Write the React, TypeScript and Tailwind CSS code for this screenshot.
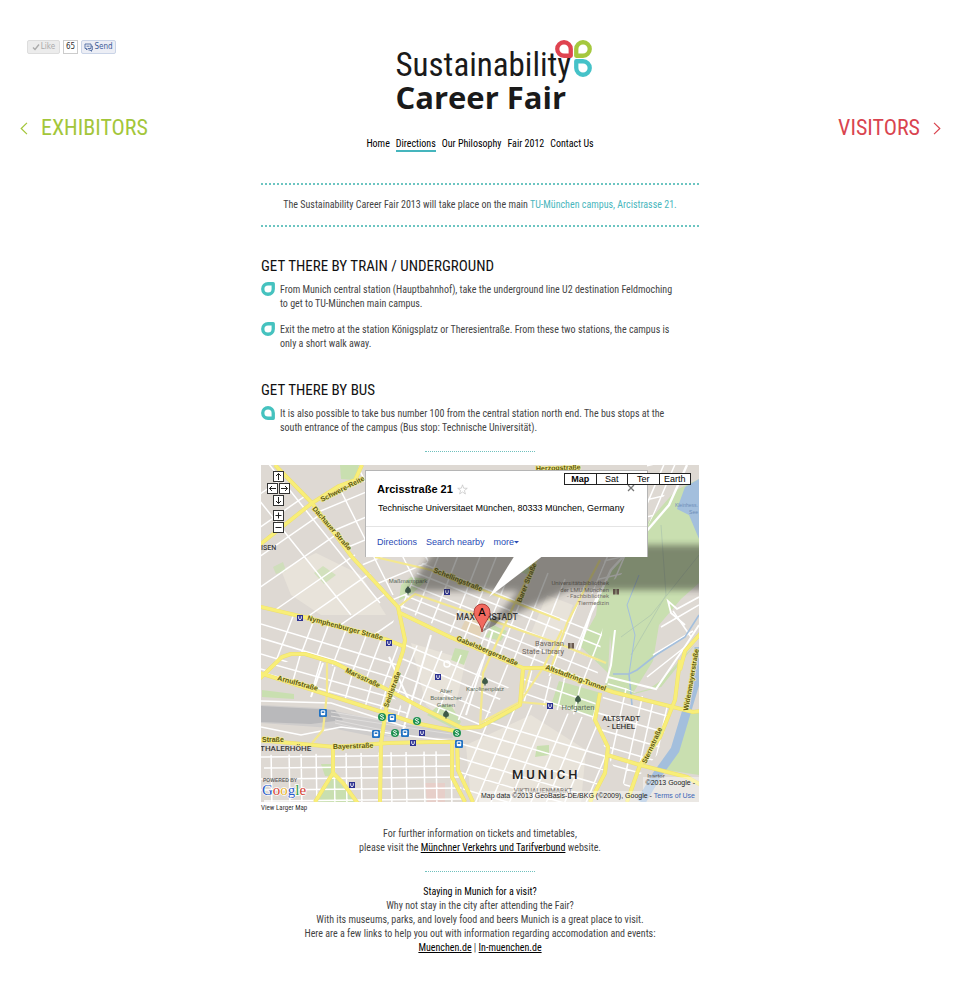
import type { ReactNode } from "react";

const BODY = "font-['Roboto_Condensed','Liberation_Sans',sans-serif]";
const ARIAL = "font-['Liberation_Sans',sans-serif]";

type Corner = "tl" | "tr" | "bl" | "br";
const cornerTurn: Record<Corner, number> = { tr: 0, br: 90, bl: 180, tl: 270 };

/* A ring whose square corner points to the given side. */
function Petal({ corner, className }: { corner: Corner; className: string }) {
  return (
    <svg viewBox="0 0 16 16" className={className} aria-hidden="true">
      <path
        transform={`rotate(${cornerTurn[corner]} 8 8)`}
        d="M8 2H14V8A6 6 0 1 1 8 2Z"
        fill="white"
        stroke="currentColor"
        strokeWidth="3.8"
        strokeLinejoin="round"
      />
    </svg>
  );
}

function Divider() {
  return <hr className="mx-auto w-[110px] border-t border-dotted border-[#6fc0bd]" />;
}

/* ---------- map ---------- */

function hatch(x: number, y: number, dx: number, dy: number, sx: number, sy: number, n: number) {
  let d = "";
  for (let i = 0; i < n; i++) {
    const skew = i % 3 === 1 ? 3 : 0;
    d += `M${x + sx * i + skew} ${y + sy * i}l${dx} ${dy}`;
  }
  return d;
}

const districts = [
  { id: "a", area: "0,0 14,0 51,38 137,142 127,174 0,142", roads: hatch(-60, 70, 130, -90, 16, 20, 10) + hatch(-30, 0, 120, 150, 26, -12, 5) },
  { id: "b", area: "0,142 127,174 142,185 127,225 44,189 0,208", roads: hatch(-10, 156, 160, 48, 0, 15, 5) + hatch(6, 220, 34, -90, 19, 1, 8) },
  { id: "c", area: "51,38 94,15 104,0 104,92 170,92 137,142", roads: hatch(50, 50, 120, -50, 9, 20, 6) + hatch(72, 10, 60, 120, 24, -4, 5) },
  { id: "d", area: "137,142 165,92 400,60 345,130 335,225 262,203", roads: hatch(120, 82, 260, 104, 0, 13, 7) + hatch(96, 200, 55, -140, 17, 6, 14) },
  { id: "e", area: "144,178 262,203 219,262 161,243 127,225", roads: hatch(120, 170, 140, 58, 2, 17, 5) + hatch(132, 240, 34, -84, 21, 7, 7) },
  { id: "f", area: "44,189 127,225 154,258 61,228 1,208 21,192", roads: hatch(0, 196, 150, 42, 0, 12, 4) + hatch(28, 230, 14, -50, 18, 4, 7) },
  { id: "g", area: "0,290 191,286 204,337 0,337", roads: hatch(0, 292, 204, -2, 0, 11, 5) + hatch(10, 284, 1, 60, 15, 0, 13) },
  { id: "h", area: "194,268 262,238 334,255 346,290 335,337 204,337", roads: hatch(190, 246, 170, 50, -3, 14, 8) + hatch(190, 345, 46, -110, 18, 1, 11) },
  { id: "i", area: "348,215 404,242 412,240 396,290 366,325 346,290 334,255", roads: hatch(330, 214, 90, 26, 0, 16, 7) + hatch(342, 330, 26, -120, 15, 0, 6) },
  { id: "j", area: "386,0 420,0 360,110 330,130 345,92 386,92", roads: hatch(330, 14, 110, -26, 0, 17, 8) + hatch(330, 130, 60, -140, 14, 0, 6) },
  { id: "k", area: "262,203 335,225 334,255 262,236", roads: hatch(250, 210, 100, 34, 0, 15, 3) + hatch(260, 250, 12, -50, 17, 2, 5) },
];

const sideStreets = [
  "114 92L170 105L222 125L299 155",
  "137 142L154 129L206 147L296 178L345 198",
  "277 92L252 142L222 208L219 262",
  "339 95L306 158L291 200",
  "66 198L66 228L62 265L51 278",
  "269 205L259 237L219 258",
  "301 165L282 203L259 237L292 240",
];

const mainRoads = [
  "14 0L51 38L91 92L137 142L144 175L142 186L127 232L120 278L119 337",
  "-4 82L51 38L78 21L94 15L101 0",
  "-4 141L47 153L127 175L144 182",
  "137 147L189 172L262 203L282 203L352 227L432 247L440 246",
  "-4 216L21 192L30 189L44 189L74 198L127 225L161 243L201 263L219 262L259 240L262 203",
  "-4 207L61 228L121 247L154 258L194 266",
  "-4 275L74 282L127 278L170 277L200 277",
  "191 277L191 312L204 337",
  "196 277L197 305L212 337",
  "72 282L72 308L54 337",
  "72 308L82 318L98 340",
  "339 228L334 255L347 282L344 308L329 337",
  "346 290L379 300L426 312L440 320",
  "419 195L414 235L399 272L379 300L366 337",
  "440 168L424 186L419 205",
];

type Label = [text: string, x: number, y: number, turn: number];
const streetLabels: Label[] = [
  ["Schwere-Reite", 61, 37, -27],
  ["Dachauer Straße", 51, 44, 49],
  ["Nymphenburger Straße", 46, 155, 15],
  ["Marsstraße", 84, 207, 25],
  ["Arnulfstraße", 16, 215, 15],
  ["Seidlstraße", 127, 243, -70],
  ["Bayerstraße", 72, 284, -2],
  ["Straße", 1, 277, 0],
  ["Schellingstraße", 172, 107, 22],
  ["Gabelsbergerstraße", 195, 175, 23],
  ["Barer Straße", 260, 138, -68],
  ["Altstadtring-Tunnel", 284, 204, 20],
  ["Sternstraße", 385, 299, -65],
  ["Widenmayerstraße", 427, 246, -80],
  ["Herzogstraße", 275, 6, -2],
];

const stations: [number, number][] = [[39, 153], [186, 127], [128, 178], [177, 212], [289, 241], [161, 268], [152, 278], [91, 320]];
const trains: [number, number][] = [[62, 248], [131, 253], [115, 269], [144, 268], [198, 279]];
const suburban: [number, number][] = [[121, 252], [156, 256], [134, 268], [196, 268]];
const trees: [number, number][] = [[147, 125], [224, 216], [317, 234], [185, 249]];

function MapDrawing() {
  return (
    <svg
      viewBox="0 0 438 337"
      preserveAspectRatio="xMidYMid slice"
      className={`absolute inset-0 size-full ${ARIAL}`}
      role="img"
      aria-label="Map of central Munich"
    >
      <defs>
        {districts.map((d) => (
          <clipPath key={d.id} id={`district-${d.id}`}>
            <polygon points={d.area} />
          </clipPath>
        ))}
        <filter id="soft" x="-10%" y="-20%" width="120%" height="140%">
          <feGaussianBlur stdDeviation="3" />
        </filter>
      </defs>
      <rect width="438" height="337" fill="#ded9d3" />
      <g fill="#e8e3da">
        <path d="M20 105L55 88L100 110L125 150L60 150L30 130Z" />
        <path d="M150 178L205 195L190 260L165 240Z" />
        <path d="M205 280L270 250L325 285L320 337H210Z" />
        <path d="M286 130L312 140L298 178L270 168Z" />
      </g>
      <path d="M209 145L226 152L218 174L200 164Z" fill="#e3d3b8" />
      <path d="M164 318h20v19h-18Z" fill="#e7cfc9" />
      <g fill="#c9dfb0">
        <path d="M438 14L415 25L380 65L350 105L338 126L335 150L318 180L347 208L349 170L354 219L400 222L438 175Z" />
        <path d="M362 165L438 120V172L400 222L362 232L344 222L350 195Z" />
        <path d="M425 247H438V310L405 305L418 285Z" />
        <path d="M79 0H98L94 15L80 14Z" />
        <path d="M140 120L150 112L167 114L152 128L138 136Z" />
        <path d="M298 216L340 228L332 252L290 240Z" />
        <path d="M178 240L190 240L200 257L194 264L166 250Z" />
        <path d="M1 225L33 229V234L1 232Z" />
        <path d="M72 309L94 337H56Z" />
        <path d="M60 299h14v12h-10Z" />
        <path d="M194 183L208 186L203 200L190 195Z" />
        <path d="M276 281L288 280V290L274 292Z" />
        <path d="M250 96L262 92L274 100L268 110L250 104Z" />
        <path d="M232 160L246 166L240 176L224 172Z" />
        <path d="M53 108L62 101L75 110L63 119Z" opacity=".7" />
        <path d="M12 102L22 97L25 106L15 109Z" opacity=".7" />
        <path d="M236 248L258 238L254 246L224 262Z" />
      </g>
      <path d="M398 160L420 134L438 118V176L424 190L402 214L388 224L372 228L392 196Z" fill="#ded9d3" />
      <path d="M400 162L438 140M392 190L432 166M386 212L424 182M412 146L430 172" stroke="white" strokeWidth="1.5" fill="none" />
      <g fill="none" stroke="#b5cdae" strokeWidth="1">
        <path d="M438 90L390 150L360 172" />
        <path d="M400 60L405 130L370 190" />
      </g>
      <path d="M0 240L60 243L130 258L190 262L192 273L110 271L70 263L0 258Z" fill="#cfcdcc" />
      <path d="M0 241L74 245L82 255L50 259L0 257Z" fill="#b9b9bb" />
      <path d="M70 247L190 266M70 251L190 269M74 255L150 271M74 258L130 271" stroke="#e0dedd" strokeWidth="1" fill="none" />
      <g fill="none" stroke="#a3bfdd">
        <path d="M438 182V205L426 245L414 285L396 310L380 337" strokeWidth="9" />
        <path d="M438 150L424 172L395 190L376 205L368 209L352 209M368 209L371 240" strokeWidth="1.6" />
        <path d="M368 209L374 170L366 140L378 110" strokeWidth="1" />
      </g>
      <path d="M424 22L438 14V74L428 50L416 44Z" fill="#a3bfdd" />
      <g fill="none" stroke="white" strokeWidth="1.5">
        {districts.map((d) => (
          <path key={d.id} d={d.roads} clipPath={`url(#district-${d.id})`} />
        ))}
        <path d="M426 0L408 40L384 68L350 105L330 148L318 185" strokeWidth="2.4" />
        <path d="M354 165L350 200L345 218M347 212L395 224L425 180L438 160" strokeWidth="2" />
        <path d="M438 132L416 144L407 136L410 148L424 160" strokeWidth="1.8" />
        <path d="M0 262L40 270L80 262L190 276M0 236L70 238L145 262" />
        <path d="M128 192L150 240M170 170L142 265M62 198L50 232M232 165L205 250" strokeWidth="2" />
        <circle cx="186" cy="199" r="3" />
      </g>
      <g fill="none" strokeLinejoin="round">
        <g stroke="#f4e88e" strokeWidth="2.2">
          {sideStreets.map((d) => <path key={d} d={`M${d}`} />)}
        </g>
        <g stroke="#eedf6c" strokeWidth="4">
          {mainRoads.map((d) => <path key={d} d={`M${d}`} />)}
        </g>
        <g stroke="#f8ee78" strokeWidth="3.2">
          {mainRoads.map((d) => <path key={d} d={`M${d}`} />)}
        </g>
      </g>

      <g fontSize="7" fontWeight="bold" fill="#5c570e" stroke="#f3eb8c" strokeWidth="1.4" paintOrder="stroke" strokeLinejoin="round">
        {streetLabels.map(([t, x, y, turn]) => (
          <text key={t} x={x} y={y} transform={`rotate(${turn} ${x} ${y})`}>{t}</text>
        ))}
      </g>
      <g fontSize="6" fill="#5c6b5c" textAnchor="middle">
        <text x="147" y="118">Maßmannpark</text>
        <text x="224" y="226">Karolinenplatz</text>
        <text x="185" y="228">Alter</text>
        <text x="185" y="235">Botanischer</text>
        <text x="185" y="242">Garten</text>
        <text x="317" y="245" fontSize="7.5">Hofgarten</text>
        <text x="437" y="42" textAnchor="end" fill="#6d8db8" fontSize="5">Kleinhess.</text>
        <text x="437" y="49" textAnchor="end" fill="#6d8db8" fontSize="5">See</text>
      </g>
      <g fontSize="7.5" fill="#6e665f" textAnchor="end" className="font-['Roboto',sans-serif]">
        <text x="303" y="181">Bavarian</text>
        <text x="303" y="189">State Library</text>
      </g>
      <g fontSize="6" fill="#77716b" textAnchor="end" className="font-['Roboto',sans-serif]">
        <text x="348" y="120">Universitätsbibliothek</text>
        <text x="348" y="127">der LMU München</text>
        <text x="348" y="133">- Fachbibliothek</text>
        <text x="348" y="140">Tiermedizin</text>
      </g>
      {[[310, 181], [355, 127]].map(([x, y]) => (
        <g key={x}>
          <path d={`M${x - 3} ${y - 3}h2.6v5.4h-2.6zM${x + 0.4} ${y - 3}h2.6v5.4h-2.6z`} fill="#6b5b50" />
        </g>
      ))}
      <g fill="#3e5a48">
        {trees.map(([x, y]) => (
          <path key={x} d={`M${x} ${y - 4}q3 3 3 5q0 2 -2.4 2v1.4h-1.2v-1.4q-2.4 0 -2.4 -2q0 -2 3 -5Z`} />
        ))}
      </g>
      <g fontSize="8" fontWeight="500" fill="#3a3a3a" className="font-['Roboto',sans-serif]">
        <text x="0" y="85" fontSize="7">ISEN</text>
        <text x="-1" y="286">THALERHÖHE</text>
        <text x="226" y="155" textAnchor="middle" fontSize="8.5">MAXVORSTADT</text>
        <text x="360" y="256" textAnchor="middle">ALTSTADT</text>
        <text x="360" y="264" textAnchor="middle">- LEHEL</text>
        <text x="251" y="314" fontSize="13" letterSpacing="3" fill="#222">MUNICH</text>
        <text x="282" y="328" fontSize="6.5" textAnchor="middle" fill="#8b8681">VIKTUALIENMARKT</text>
        <text x="395" y="313" fontSize="6" textAnchor="middle" fill="#6e665f">Isartor</text>
      </g>

      {stations.map(([x, y]) => (
        <g key={`${x}-${y}`}>
          <rect x={x - 3} y={y - 3} width="6" height="6" fill="#2c3191" />
          <path d={`M${x - 1.3} ${y - 1.8}v2q0 1.4 1.3 1.4t1.3 -1.4v-2`} fill="none" stroke="white" strokeWidth=".9" />
        </g>
      ))}
      {trains.map(([x, y]) => (
        <g key={`${x}-${y}`}>
          <rect x={x - 4} y={y - 4} width="8" height="8" rx="1.2" fill="#2273c3" />
          <rect x={x - 2.2} y={y - 2.8} width="4.4" height="5" rx="1" fill="white" />
          <rect x={x - 1.3} y={y - 1.6} width="2.6" height="1.6" fill="#2273c3" />
        </g>
      ))}
      {suburban.map(([x, y]) => (
        <g key={`${x}-${y}`}>
          <circle cx={x} cy={y} r="4" fill="#1d9150" />
          <path d={`M${x + 1.7} ${y - 1.6}q-3 -1.6 -3.4 0q0 1 1.7 1.4q1.9 .5 1.7 1.6q-.5 1.6 -3.5 .2`} fill="none" stroke="white" strokeWidth="1" />
        </g>
      ))}

      {/* balloon shadow */}
      <g fill="#2c2a26" opacity=".48" filter="url(#soft)">
        <path d="M184 80H446V125H308L228 160L258 126H146L168 92Z" />
      </g>
      {/* marker */}
      <path d="M221 167L232 151L240 153L234 160Z" fill="black" opacity=".35" />
      <path d="M221 167C220 158 213 154 213 147A8 8 0 0 1 229 147C229 154 222 158 221 167Z" fill="#f2695f" stroke="#9c2c26" strokeWidth=".8" />
      <text x="221" y="151" fontSize="11" textAnchor="middle" fill="black">A</text>
      {/* balloon tail */}
      <path d="M254 90L228 132L283 90Z" fill="white" />

      <path d="M218 326H438V337H218Z M382 312H438V326H382Z" fill="white" opacity=".4" />
      <text x="2" y="317" fontSize="5" fontWeight="bold" fill="#666">POWERED BY</text>
      <text x="1" y="330" fontSize="15" className="font-['Liberation_Serif',serif]" stroke="white" strokeWidth="1.4" paintOrder="stroke">
        <tspan fill="#2a5ac8">G</tspan>
        <tspan fill="#d43a2f">o</tspan>
        <tspan fill="#e8b324">o</tspan>
        <tspan fill="#2a5ac8">g</tspan>
        <tspan fill="#2e9c46">l</tspan>
        <tspan fill="#d43a2f">e</tspan>
      </text>
    </svg>
  );
}

function PanButton({ label, d, className }: { label: string; d: string; className: string }) {
  return (
    <button type="button" aria-label={label} className={`flex size-[11px] items-center justify-center border border-[#333] bg-white ${className}`}>
      <svg viewBox="0 0 9 9" className="size-[9px]" fill="none" stroke="#222" strokeWidth="1" aria-hidden="true">
        <path d={d} />
      </svg>
    </button>
  );
}

function MapView() {
  const views = ["Map", "Sat", "Ter", "Earth"];
  return (
    <div className="relative h-[337px] overflow-hidden">
      <MapDrawing />

      <div className={`absolute left-[104px] top-[5px] h-[87px] w-[283px] border border-b-0 border-[#b5b5b5] bg-white ${ARIAL}`}>
        <div className="h-[56px] border-b border-[#e4e4e4] px-[11px] pt-[11px]">
          <div className="flex items-center gap-1">
            <h3 className="text-[11px] font-bold leading-[14px] text-black">Arcisstraße 21</h3>
            <svg viewBox="0 0 12 12" className="size-[11px]" fill="none" stroke="#c4c4c4" strokeWidth=".8" aria-label="Save place" role="img">
              <path d="M6 .9L7.3 4.6L11.2 4.7L8.1 7.1L9.2 10.9L6 8.7L2.8 10.9L3.9 7.1L.8 4.7L4.7 4.6Z" />
            </svg>
          </div>
          <p className="mt-[6px] whitespace-nowrap px-px text-[9px] leading-[12px] text-black">
            Technische Universitaet München, 80333 München, Germany
          </p>
        </div>
        <div className="flex gap-[9px] px-[11px] pt-2 text-[9px] leading-[14px] text-[#2a4bb5]">
          <a href="#directions">Directions</a>
          <a href="#nearby">Search nearby</a>
          <a href="#more" className="flex items-center">
            more
            <svg viewBox="0 0 5 4" className="h-1 w-[5px]" fill="currentColor" aria-hidden="true"><path d="M0 1H5L2.5 3.4Z" /></svg>
          </a>
        </div>
        <button type="button" aria-label="Close" className="absolute right-3 top-[13px] size-[8px] text-[#777]">
          <svg viewBox="0 0 8 8" fill="none" stroke="currentColor" strokeWidth="1.3"><path d="M1 1L7 7M7 1L1 7" /></svg>
        </button>
      </div>

      <div className={`absolute right-2 top-2 flex w-[127px] border border-[#222] bg-white text-[9px] leading-[10px] text-black ${ARIAL}`}>
        {views.map((v, i) => (
          <button key={v} type="button" className={`flex-1 basis-0 ${i > 0 ? "border-l border-[#222]" : "font-bold"}`}>{v}</button>
        ))}
      </div>

      <div className="absolute left-[6px] top-[6px] grid grid-cols-4 gap-px">
        <PanButton label="Pan up" d="M4.5 8V1.5M2 4L4.5 1.5L7 4" className="col-span-4 mx-auto" />
        <div className="col-span-4 flex gap-px">
          <PanButton label="Pan left" d="M8 4.5H1.5M4 2L1.5 4.5L4 7" className="" />
          <PanButton label="Pan right" d="M1 4.5H7.5M5 2L7.5 4.5L5 7" className="" />
        </div>
        <PanButton label="Pan down" d="M4.5 1V7.5M2 5L4.5 7.5L7 5" className="col-span-4 mx-auto" />
        <PanButton label="Zoom in" d="M4.5 1.5V7.5M1.5 4.5H7.5" className="col-span-4 mx-auto mt-[3px]" />
        <PanButton label="Zoom out" d="M1.5 4.5H7.5" className="col-span-4 mx-auto" />
      </div>

      <p className={`absolute bottom-0 right-1 whitespace-nowrap text-right text-[7px] leading-[13px] text-[#222] ${ARIAL}`}>
        ©2013 Google -
        <br />
        Map data ©2013 GeoBasis-DE/BKG (©2009), Google - <a href="#terms" className="text-[#3d67b8]">Terms of Use</a>
      </p>
    </div>
  );
}

/* ---------- page ---------- */

const nav = ["Home", "Directions", "Our Philosophy", "Fair 2012", "Contact Us"];

function Bullet({ corner, children }: { corner: Corner; children: ReactNode }) {
  return (
    <li className="flex gap-[5px]">
      <Petal corner={corner} className="-mt-px size-[14px] shrink-0 text-[#45c2bf]" />
      <span>{children}</span>
    </li>
  );
}

export default function App() {
  return (
    <div className={`grid min-h-screen grid-cols-[1fr_minmax(0,438px)_1fr] bg-white pb-10 text-[10px] leading-[14px] text-[#444] ${BODY}`}>
      <aside className="flex flex-col gap-[61px] pl-5 pt-10">
        <div className="ml-[7px] flex gap-[3px] font-['DejaVu_Sans_Condensed','DejaVu_Sans',sans-serif] text-[8px] leading-[12px]">
          <button type="button" className="flex w-[33px] items-center justify-center gap-px rounded-xs border border-[#ddd] bg-[#ececec] text-[#aaa]">
            <svg viewBox="0 0 8 8" className="size-[8px]" fill="none" stroke="currentColor" strokeWidth="1.4" aria-hidden="true"><path d="M1 4.5L3 6.5L7 1.5" /></svg>
            Like
          </button>
          <span className="w-[15px] border border-[#ccc] text-center text-[#333]">65</span>
          <button type="button" className="flex w-[35px] items-center justify-center gap-px rounded-xs border border-[#cad4e7] bg-[#eceef5] text-[#3b5998]">
            <svg viewBox="0 0 9 9" className="size-[9px] shrink-0" fill="none" stroke="currentColor" strokeWidth=".8" aria-hidden="true">
              <path d="M1 1H7V5.5H4L2.5 7V5.5H1ZM7 3H8.3V7H7.5V8.3L6 7H4.5M2.5 3.2H5.5" />
            </svg>
            Send
          </button>
        </div>
        <a href="#exhibitors" className="flex items-center gap-[13px] text-[22px] leading-[26px] text-[#a3c63a]">
          <svg viewBox="0 0 8 14" className="h-[13px] w-[8px]" fill="none" stroke="currentColor" strokeWidth="1.3" aria-hidden="true"><path d="M7.2 1L1 7L7.2 13" /></svg>
          EXHIBITORS
        </a>
      </aside>

      <main className="pt-10">
        <header className="flex flex-col items-center">
          <a href="#home" aria-label="Sustainability Career Fair" className="ml-[26px] flex w-[195px] flex-col text-[#1a1a1a]">
            <span className="flex">
              <span className="pt-[9px] text-[33px] leading-[32px]">Sustainability</span>
              <span className="-ml-4 grid h-[37px] w-[36px] shrink-0 grid-cols-2 gap-px">
                <Petal corner="br" className="size-[18px] text-[#df4350]" />
                <Petal corner="bl" className="size-[18px] text-[#a5c83e]" />
                <span />
                <Petal corner="tl" className="size-[18px] text-[#45c2c8]" />
              </span>
            </span>
            <span className="font-['Open_Sans',sans-serif] text-[31px] font-bold leading-[32px]">Career Fair</span>
          </a>
          <nav className="mt-6 flex gap-[6px] leading-[13px] text-black">
            {nav.map((item) => (
              <a key={item} href={`#${item}`} className={item === "Directions" ? "border-b-2 border-[#45b5bd]" : ""}>{item}</a>
            ))}
          </nav>
        </header>

        <p className="mt-[31px] border-y-2 border-dotted border-[#6cc5c1] py-[13px] text-center">
          The Sustainability Career Fair 2013 will take place on the main{" "}
          <a href="#campus" className="text-[#49b6bd]">TU-München campus, Arcistrasse 21.</a>
        </p>

        <section className="mt-7">
          <h2 className="text-[15px] leading-[22px] text-[#111]">GET THERE BY TRAIN / UNDERGROUND</h2>
          <ul className="mt-[6px] flex flex-col gap-3">
            <Bullet corner="tr">
              From Munich central station (Hauptbahnhof), take the underground line U2 destination Feldmoching
              <br />to get to TU-München main campus.
            </Bullet>
            <Bullet corner="tr">
              Exit the metro at the station Königsplatz or Theresientraße. From these two stations, the campus is
              <br />only a short walk away.
            </Bullet>
          </ul>
        </section>

        <section className="mb-4 mt-7">
          <h2 className="text-[15px] leading-[22px] text-[#111]">GET THERE BY BUS</h2>
          <ul className="mt-[6px]">
            <Bullet corner="br">
              It is also possible to take bus number 100 from the central station north end. The bus stops at the
              <br />south entrance of the campus (Bus stop: Technische Universität).
            </Bullet>
          </ul>
        </section>

        <Divider />
        <div className="mt-[13px]">
          <MapView />
          <a href="#map" className="block text-[7px] leading-[12px] text-[#333]">View Larger Map</a>
        </div>

        <p className="mb-4 mt-[13px] text-center">
          For further information on tickets and timetables,
          <br />
          please visit the <a href="#mvv" className="text-black underline">Münchner Verkehrs und Tarifverbund</a> website.
        </p>
        <Divider />
        <div className="mt-[13px] text-center">
          <h3 className="text-black">Staying in Munich for a visit?</h3>
          <p>Why not stay in the city after attending the Fair?</p>
          <p>With its museums, parks, and lovely food and beers Munich is a great place to visit.</p>
          <p>Here are a few links to help you out with information regarding accomodation and events:</p>
          <p>
            <a href="#muenchen" className="text-black underline">Muenchen.de</a> | <a href="#in-muenchen" className="text-black underline">In-muenchen.de</a>
          </p>
        </div>
      </main>

      <aside className="flex justify-end pr-[19px] pt-[115px]">
        <a href="#visitors" className="flex h-[26px] items-center gap-[13px] text-[22px] leading-[26px] text-[#d9444f]">
          VISITORS
          <svg viewBox="0 0 8 14" className="h-[13px] w-[8px]" fill="none" stroke="currentColor" strokeWidth="1.3" aria-hidden="true"><path d="M.8 1L7 7L.8 13" /></svg>
        </a>
      </aside>
    </div>
  );
}
